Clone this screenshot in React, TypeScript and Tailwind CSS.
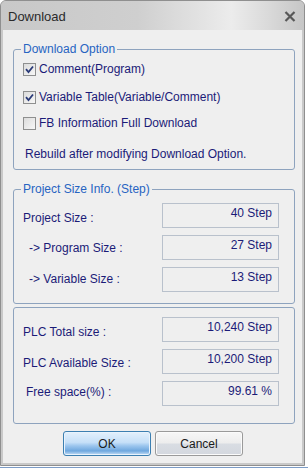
import React from "react";

const font = { fontFamily: '"Liberation Sans", Arial, sans-serif' };

const CheckRow = ({ checked, label, className }: { checked: boolean; label: string; className: string }) => (
  <div className={`flex items-center h-[14px] ml-[2px] ${className}`}>
    <div className="w-[13px] h-[13px] border border-[#8e8f8f] bg-[linear-gradient(135deg,#dcdcdc,#f7f7f7)] flex items-center justify-center shrink-0">
      {checked && (
        <svg width="9" height="9" viewBox="0 0 9 9">
          <path d="M1 4.2 L3.5 7 L8 1.5" fill="none" stroke="#2a3a78" strokeWidth="1.8" />
        </svg>
      )}
    </div>
    <span className="ml-[3px] text-[12px] leading-[14px] text-[#1b1b78] whitespace-nowrap">{label}</span>
  </div>
);

const SizeRow = ({
  label,
  value,
  indent,
  labelTop,
  className,
}: {
  label: string;
  value: string;
  indent: string;
  labelTop: string;
  className?: string;
}) => (
  <div className={`flex h-[25px] ${className ?? ""}`}>
    <div className={`w-[141px] ${indent}`}>
      <div className={`${labelTop} text-[12px] leading-[14px] text-[#1b1b78] whitespace-nowrap`}>{label}</div>
    </div>
    <div className="w-[117px] h-[25px] border border-[#b9c1cc] bg-[#efefef] pt-[2px] pr-[6px] text-right text-[12px] leading-[14px] text-[#1b1b78]">
      {value}
    </div>
  </div>
);

export default function App() {
  return (
    <div className="bg-white w-[308px] h-[469px]" style={font}>
      <div className="w-[305px] h-[466px] border border-[#8f8f8f] rounded-t-[6px] overflow-hidden flex flex-col bg-[#c9c9c9]">
        {/* title bar */}
        <div className="h-[29px] shrink-0 flex items-center justify-between pl-[7px] pr-[8px] bg-[linear-gradient(to_right,#c8c8c8,#cfcfcf_45%,#ececec_76%,#dadada_88%,#c6c6c6)]">
          <span className="text-[13px] text-[#2a2a2a] mt-[2px]">Download</span>
          <svg width="12" height="11" viewBox="0 0 12 11" className="mt-[1px]">
            <path d="M1.5 1 L10.5 10 M10.5 1 L1.5 10" stroke="#585858" strokeWidth="2.2" />
          </svg>
        </div>

        {/* body */}
        <div className="flex-1 mx-[2px] mb-[2px] bg-[#efefef] pt-[12px] pl-[10px] pr-[7px] flex flex-col">
          <fieldset className="border border-[#8ea3be] rounded-[3px] px-[7px] pb-[8px]">
            <legend className="px-[2px] text-[12px] leading-[14px] text-[#2764c2]">Download Option</legend>
            <CheckRow checked label="Comment(Program)" className="mt-[6px]" />
            <CheckRow checked label="Variable Table(Variable/Comment)" className="mt-[14px]" />
            <CheckRow checked={false} label="FB Information Full Download" className="mt-[12px]" />
            <div className="mt-[17px] ml-[4px] h-[14px] text-[12px] leading-[14px] text-[#1b1b78] whitespace-nowrap">
              Rebuild after modifying Download Option.
            </div>
          </fieldset>

          <fieldset className="mt-[12px] border border-[#8ea3be] rounded-[3px] px-[7px] pb-[11px]">
            <legend className="px-[2px] text-[12px] leading-[14px] text-[#2764c2]">Project Size Info. (Step)</legend>
            <SizeRow label="Project Size :" value="40 Step" indent="pl-[2px]" labelTop="mt-[8px]" className="mt-[7px]" />
            <SizeRow label="-> Program Size :" value="27 Step" indent="pl-[8px]" labelTop="mt-[6px]" className="mt-[7px]" />
            <SizeRow label="-> Variable Size :" value="13 Step" indent="pl-[8px]" labelTop="mt-[5px]" className="mt-[7px]" />
          </fieldset>

          <div className="mt-[3px] border border-[#8ea3be] rounded-[3px] px-[7px] pt-[9px] pb-[17px] flex flex-col gap-[7px]">
            <SizeRow label="PLC Total size :" value="10,240 Step" indent="pl-[2px]" labelTop="mt-[8px]" />
            <SizeRow label="PLC Available Size :" value="10,200 Step" indent="pl-[2px]" labelTop="mt-[7px]" />
            <SizeRow label="Free space(%) :" value="99.61 %" indent="pl-[5px]" labelTop="mt-[4px]" />
          </div>

          <div className="mt-[7px] flex justify-center gap-[4px] pr-[2px]">
            <button className="w-[88px] h-[25px] rounded-[3px] border border-[#3c7fb1] bg-[linear-gradient(to_bottom,#e3f0fc,#c6e0f8_45%,#9cc6ee_60%,#6ea7de_82%,#c9e1f7)] text-[12px] text-[#1a1a1a] shadow-[inset_0_0_0_1px_#e8f3fd]">
              OK
            </button>
            <button className="w-[88px] h-[25px] rounded-[3px] border border-[#9a9a9a] bg-[linear-gradient(to_bottom,#f7f7f7,#ededed_48%,#d9dde3_52%,#d3d7de)] text-[12px] text-[#1a1a1a] shadow-[inset_0_0_0_1px_#fbfbfb]">
              Cancel
            </button>
          </div>
        </div>
      </div>
      <div className="h-[1px] mt-[1px] bg-[#7c9cc7]" />
    </div>
  );
}
